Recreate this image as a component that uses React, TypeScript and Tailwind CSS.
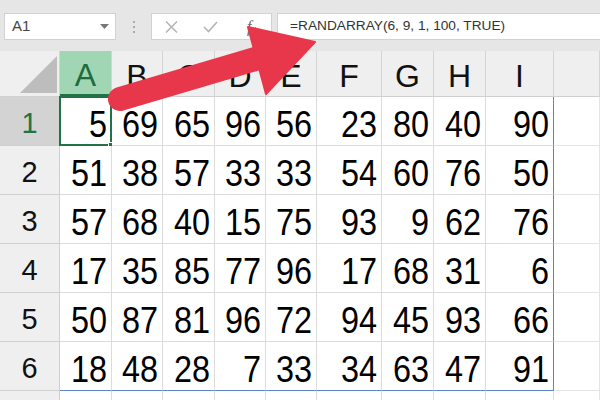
import React from 'react';

const COLS = ['A', 'B', 'C', 'D', 'E', 'F', 'G', 'H', 'I'];

const DATA: number[][] = [
  [5, 69, 65, 96, 56, 23, 80, 40, 90],
  [51, 38, 57, 33, 33, 54, 60, 76, 50],
  [57, 68, 40, 15, 75, 93, 9, 62, 76],
  [17, 35, 85, 77, 96, 17, 68, 31, 6],
  [50, 87, 81, 96, 72, 94, 45, 93, 66],
  [18, 48, 28, 7, 33, 34, 63, 47, 91],
];

const GRID = 'grid grid-cols-[60px_52px_51px_52px_51px_51px_65px_52px_52px_68px_1fr]';

function Toolbar() {
  return (
    <div className="h-[51px] bg-[#e6e6e6] flex items-start pt-[13px] pl-[4px] text-[#333]">
      {/* Name box */}
      <div className="w-[112px] h-[27px] bg-white border border-[#d2d2d2] flex items-center pl-[7px] pr-[6px]">
        <span className="text-[15px] text-[#444] flex-1">A1</span>
        <svg width="9" height="6" viewBox="0 0 9 6">
          <path d="M0 0 L9 0 L4.5 5 Z" fill="#777" />
        </svg>
      </div>

      {/* Separator dots */}
      <div className="w-[35px] h-[27px] flex flex-col items-center justify-center gap-[3px]">
        <div className="w-[2px] h-[2px] bg-[#aaa]" />
        <div className="w-[2px] h-[2px] bg-[#aaa]" />
        <div className="w-[2px] h-[2px] bg-[#aaa]" />
      </div>

      {/* Cancel / Enter / fx */}
      <div className="w-[121px] h-[27px] bg-white border border-[#d2d2d2] flex items-center pl-[13px]">
        <svg width="13" height="12" viewBox="0 0 13 12">
          <path d="M1 0.5 L12 11.5 M12 0.5 L1 11.5" stroke="#b4b4b4" strokeWidth="1.5" />
        </svg>
        <svg className="ml-[25px]" width="15" height="12" viewBox="0 0 15 12">
          <path d="M1 6 L5.5 10.5 L14 1" stroke="#b4b4b4" strokeWidth="1.6" fill="none" />
        </svg>
        <span className="ml-[29px] font-['Liberation_Serif',serif] italic text-[16px] text-[#666] leading-none">
          f<span className="text-[10px]">x</span>
        </span>
      </div>

      {/* Formula input */}
      <div className="flex-1 ml-[5px] h-[27px] bg-white border border-[#d2d2d2] border-r-0 flex items-center pl-[12px]">
        <span className="text-[13.7px] text-[#333]">=RANDARRAY(6, 9, 1, 100, TRUE)</span>
      </div>
    </div>
  );
}

function HeaderRow() {
  return (
    <div className={`${GRID} h-[46px] bg-[#efefef] border-b border-[#cfcfcf]`}>
      <div className="relative border-r border-[#d4d4d4]">
        <svg className="absolute left-[20px] bottom-[3px]" width="37" height="37" viewBox="0 0 37 37">
          <path d="M0 37 L37 0 L37 37 Z" fill="#bdbdbd" />
        </svg>
      </div>
      {COLS.map((c, i) => (
        <div
          key={c}
          className={`flex items-center justify-center pt-[4px] text-[32px] leading-none border-r border-[#d4d4d4] ${
            i === 0 ? 'bg-[#a0d6b4] text-[#1e6b3c] border-b-2 border-b-[#217346]' : 'text-[#111]'
          }`}
        >
          {c}
        </div>
      ))}
      <div className="border-r border-[#d4d4d4]" />
    </div>
  );
}

function DataRow({ row, values }: { row: number; values: number[] | null }) {
  const selected = row === 1;
  return (
    <div className={`${GRID} h-[49px]`}>
      <div
        className={`flex items-center justify-center pt-[5px] text-[29px] leading-none border-b border-r border-[#d0d0d0] ${
          selected ? 'bg-[#d3d3d3] text-[#217346]' : 'bg-[#efefef] text-[#111]'
        }`}
      >
        {values ? row : ''}
      </div>
      {COLS.map((c, i) => {
        const isA1 = selected && i === 0;
        const lastCol = i === COLS.length - 1;
        const lastRow = row === 6;
        return (
          <div
            key={c}
            className={`relative bg-white flex items-end justify-end pr-[4px] pb-[2px] text-[36px] leading-none text-black border-b border-r ${
              lastCol && values ? 'border-r-[#5b86c8]' : 'border-r-[#dcdcdc]'
            } ${lastRow ? 'border-b-[#5b86c8]' : 'border-b-[#dcdcdc]'}`}
          >
            {values && (
              <span className="inline-block origin-right scale-x-[0.9]">{values[i]}</span>
            )}
            {isA1 && (
              <>
                <div className="absolute -left-[1px] -top-[1px] -right-[1px] -bottom-[1px] border-2 border-[#217346]" />
                <div className="absolute -right-[4px] -bottom-[4px] w-[7px] h-[7px] bg-[#217346] border border-white" />
              </>
            )}
          </div>
        );
      })}
      <div className="bg-white border-b border-r border-[#e4e4e4]" />
    </div>
  );
}

function Arrow() {
  return (
    <svg className="absolute inset-0 pointer-events-none" width="600" height="400" viewBox="0 0 600 400">
      <line x1="120" y1="99" x2="262" y2="57" stroke="#e8364b" strokeWidth="24" strokeLinecap="round" />
      <path d="M248 27 L266 94 L315 42 Z" fill="#e8364b" strokeLinejoin="round" stroke="#e8364b" strokeWidth="2" />
    </svg>
  );
}

export default function App() {
  return (
    <div className="relative w-[600px] h-[400px] overflow-hidden bg-white font-['Liberation_Sans',Arial,sans-serif]">
      <Toolbar />
      <HeaderRow />
      {DATA.map((vals, r) => (
        <DataRow key={r} row={r + 1} values={vals} />
      ))}
      <DataRow row={7} values={null} />
      <Arrow />
    </div>
  );
}
